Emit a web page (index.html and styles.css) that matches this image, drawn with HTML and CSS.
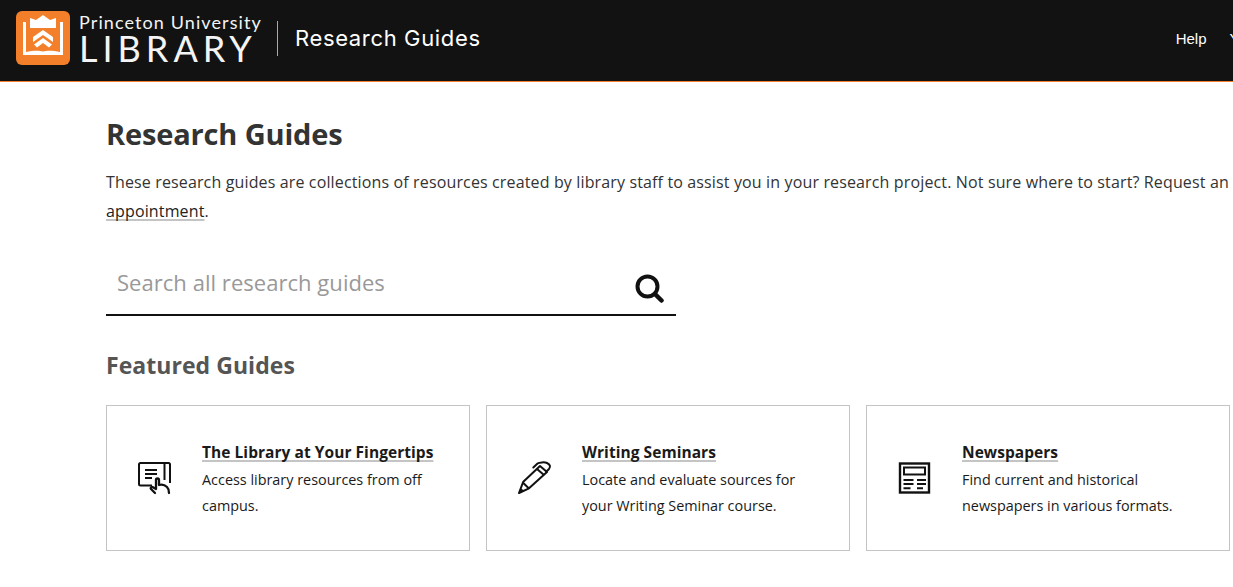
FILE: index.html
```html
<!DOCTYPE html>
<html lang="en">
<head>
<meta charset="utf-8">
<title>Research Guides</title>
<link rel="stylesheet" href="styles.css">
</head>
<body>
<header class="topbar">
  <a class="brand" href="#">
    <svg class="logo" viewBox="0 0 54 54" aria-hidden="true">
      <rect width="54" height="54" rx="6" fill="#f47f2a"/>
      <path d="M7 11h3v30c6-1.300 13-1.800 17-.5 4-1.300 11-.8 17 .5V11h3v33H7z" fill="#fff"/>
      <path d="M14 7l6 2 7-5 7 5 6-2v10H14z" fill="#fff"/>
      <path d="M27 19l10 7v5l-10-7-10 7v-5z" fill="#fff"/>
      <path d="M27 27l9 6.500-3 3-6-4.500-6 4.500-3-3z" fill="#fff"/>
    </svg>
    <span class="wordmark">
      <span class="wm-top">Princeton University</span>
      <span class="wm-bottom">LIBRARY</span>
    </span>
  </a>
  <span class="divider"></span>
  <span class="site-name">Research Guides</span>
  <nav class="topnav">
    <a href="#">Help</a>
    <a href="#">Your Account</a>
  </nav>
</header>
<main class="content">
  <h1>Research Guides</h1>
  <p class="intro">These research guides are collections of resources created by library staff to assist you in your research project. Not sure where to start? Request an <a href="#">appointment</a>.</p>
  <form class="search">
    <input type="text" placeholder="Search all research guides">
    <button type="button" aria-label="Search">
      <svg viewBox="0 0 30 30" width="30" height="30" aria-hidden="true">
        <circle cx="13.500" cy="13.500" r="10" fill="none" stroke="#111" stroke-width="4"/>
        <path d="M21 21l6.500 6.500" stroke="#111" stroke-width="4.500" stroke-linecap="round"/>
      </svg>
    </button>
  </form>
  <h2>Featured Guides</h2>
  <div class="cards">
    <article class="card">
      <svg class="icon" viewBox="0 0 36 36" aria-hidden="true">
        <path d="M15 25.500H3.500A1.500 1.500 0 0 1 2 24V4.500A1.500 1.500 0 0 1 3.500 3h28A1.500 1.500 0 0 1 33 4.500V23" fill="none" stroke="#111" stroke-width="2"/>
        <path d="M27.500 3v17" fill="none" stroke="#111" stroke-width="2"/>
        <path d="M8 10h12M8 14h12M8 18h7" stroke="#111" stroke-width="2" fill="none"/>
        <path d="M18 33l-4-4c-1-1 .5-2.500 1.500-2l3.500 2V20c0-2 3-2 3 0v5c3-1 6 0 8 2 1.500 1.500 2 3 2 6" fill="#fff" stroke="#111" stroke-width="2.300" stroke-linejoin="round" stroke-linecap="round"/>
      </svg>
      <div class="card-body">
        <h3><a href="#">The Library at Your Fingertips</a></h3>
        <p>Access library resources from off campus.</p>
      </div>
    </article>
    <article class="card">
      <svg class="icon" viewBox="0 0 36 36" aria-hidden="true">
        <path d="M2 33l4.300-11.300L23 6l7 6-18 16.300z" fill="none" stroke="#111" stroke-width="2" stroke-linejoin="round"/>
        <path d="M6.300 23l5.700 5.500M20 9l7 6" fill="none" stroke="#111" stroke-width="2"/>
        <path d="M16.300 7.500l4.200-4c1.500-1.300 7.500-1.500 9.500-.5 3 1.500 4 3.500 2 6l-3 3" fill="none" stroke="#111" stroke-width="2" stroke-linecap="round"/>
        <path d="M2 33l1.500-5 3.500 2.500z" fill="#111"/>
      </svg>
      <div class="card-body">
        <h3><a href="#">Writing Seminars</a></h3>
        <p>Locate and evaluate sources for your Writing Seminar course.</p>
      </div>
    </article>
    <article class="card">
      <svg class="icon" viewBox="0 0 36 36" aria-hidden="true">
        <rect x="3" y="3.500" width="29" height="29" fill="none" stroke="#111" stroke-width="2.400"/>
        <rect x="7" y="7.500" width="21" height="7" fill="none" stroke="#111" stroke-width="2"/>
        <path d="M6.500 20h10M20 20h9M6.500 24h10M20 24h9M6.500 28.300h7M20 28.300h6" stroke="#111" stroke-width="2" fill="none"/>
      </svg>
      <div class="card-body">
        <h3><a href="#">Newspapers</a></h3>
        <p>Find current and historical newspapers in various formats.</p>
      </div>
    </article>
  </div>
</main>
</body>
</html>
```

FILE: styles.css
```css
html, body {
  margin: 0;
  padding: 0;
  height: 587px;
  overflow: hidden;
  background: #fff;
}
body {
  width: 1233px;
  font-family: "Open Sans", sans-serif;
  color: #222;
}
a { color: inherit; text-decoration: none; }

.topbar {
  display: flex;
  align-items: center;
  height: 76px;
  width: 1400px;
  padding: 0 0 5px 16px;
  background: #121212;
  border-bottom: 1px solid #f47f2a;
  color: #fff;
}
.brand { display: flex; flex: none; align-items: center; gap: 9px; }
.logo { width: 54px; height: 54px; flex: none; display: block; }
.wordmark { display: flex; flex-direction: column; font-family: Lato, sans-serif; color: #f4f4f4; }
.wm-top { font-size: 18px; line-height: 20px; letter-spacing: 1.100px; white-space: nowrap; }
.wm-bottom { font-size: 36px; line-height: 32px; letter-spacing: 5px; }
.divider { flex: none; width: 1px; height: 35px; background: #a9a9a9; margin: 0 17px 0 15px; }
.site-name { flex: none; font-family: Inter, sans-serif; font-size: 22px; letter-spacing: .65px; white-space: nowrap; }
.topnav { flex: none; margin-left: 695px; display: flex; gap: 23px; font-family: "Liberation Sans", Arial, sans-serif; font-size: 15px; white-space: nowrap; }

.content { padding: 35px 0 0 106px; width: 1126px; }
h1 { margin: 0; font-size: 29px; line-height: 34px; font-weight: 700; color: #333; letter-spacing: -.15px; }
.intro { margin: 17px 0 0; font-size: 16px; line-height: 29px; letter-spacing: .14px; color: #333; }
.intro a, h3 a {
  text-decoration: underline;
  text-decoration-color: #c4c4c4;
  text-decoration-thickness: 2px;
  text-underline-offset: 2px;
  text-decoration-skip-ink: none;
}
.intro a { color: #222; }

.search { display: flex; align-items: center; width: 570px; height: 62px; margin-top: 26px; border-bottom: 2px solid #111; }
.search input {
  flex: 1;
  min-width: 0;
  border: 0;
  outline: 0;
  padding: 0 0 0 11px;
  height: 40px;
  margin-bottom: 2px;
  font-family: "Open Sans", sans-serif;
  font-size: 22px;
  letter-spacing: .04px;
  color: #333;
  background: transparent;
}
.search input::placeholder { color: #999; opacity: 1; }
.search button { background: none; border: 0; padding: 0; margin: 10px 12px 0 0; width: 30px; height: 30px; }
.search svg { display: block; }

h2 { margin: 32px 0 0; font-size: 23px; line-height: 34px; font-weight: 700; color: #555; letter-spacing: .05px; }

.cards { display: grid; grid-template-columns: repeat(3, 364px); gap: 16px; margin-top: 23px; }
.card {
  display: flex;
  align-items: center;
  box-sizing: border-box;
  height: 146px;
  border: 1px solid #c4c4c4;
  padding: 0 30px 0 30px;
}
.icon { width: 36px; height: 36px; flex: none; margin-right: 29px; }
.card-body { flex: 1; min-width: 0; margin-top: 1px; }
h3 { margin: 0; font-size: 15.500px; line-height: 26px; font-weight: 700; color: #1a1a1a; letter-spacing: .05px; }
.card-body p { margin: 2px 0 0; font-size: 14.400px; line-height: 26px; color: #1a1a1a; }
```
